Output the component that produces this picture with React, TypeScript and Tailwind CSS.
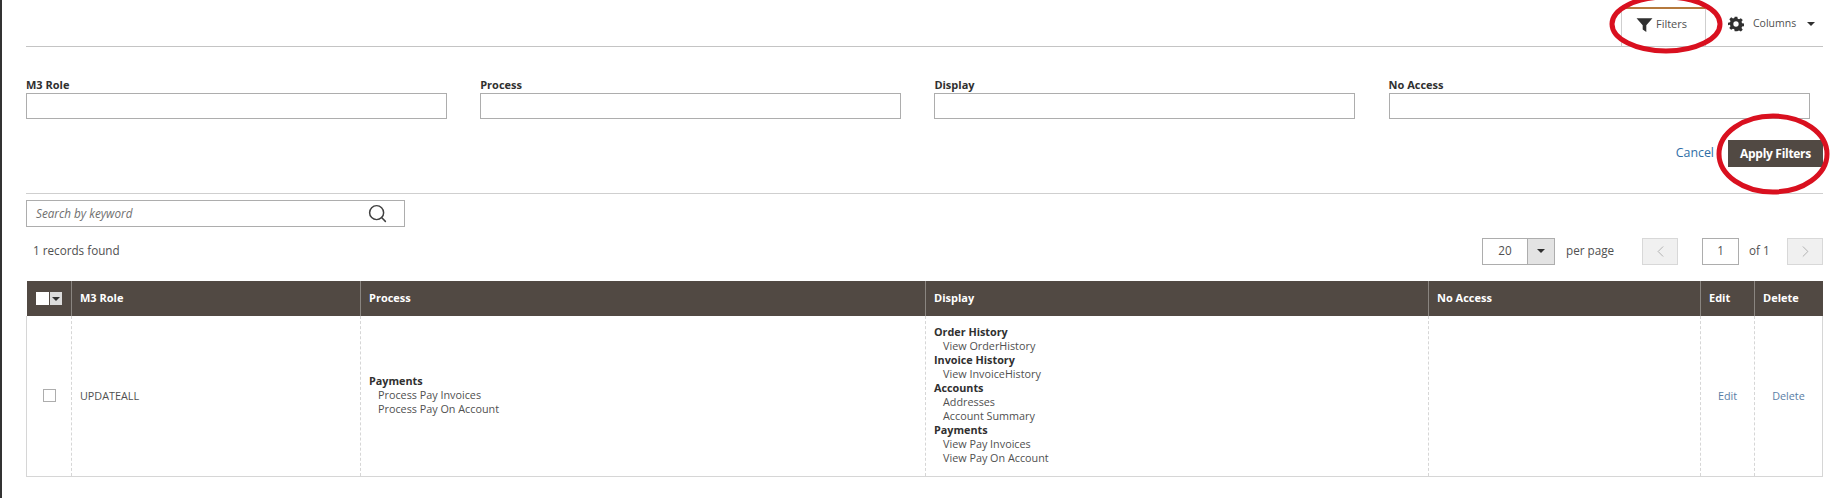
import { ChevronLeft, ChevronRight, Search } from "lucide-react";

const filterFields = ["M3 Role", "Process", "Display", "No Access"];

const processGroups = [
  { title: "Payments", items: ["Process Pay Invoices", "Process Pay On Account"] },
];

const displayGroups = [
  { title: "Order History", items: ["View OrderHistory"] },
  { title: "Invoice History", items: ["View InvoiceHistory"] },
  { title: "Accounts", items: ["Addresses", "Account Summary"] },
  { title: "Payments", items: ["View Pay Invoices", "View Pay On Account"] },
];

function Caret() {
  return <span className="inline-block w-0 h-0 border-x-[4px] border-x-transparent border-t-[4px] border-t-[#303030]" />;
}

function Groups({ groups }: { groups: { title: string; items: string[] }[] }) {
  return (
    <div className="leading-[14px] pb-[2px]">
      {groups.map((g, i) => (
        <div key={i}>
          <div className="font-bold text-[#303030]">{g.title}</div>
          {g.items.map((item) => (
            <div key={item} className="pl-[9px] text-[#505050]">{item}</div>
          ))}
        </div>
      ))}
    </div>
  );
}

export default function App() {
  return (
    <div className="relative w-[1833px] h-[498px] overflow-hidden bg-white border-l-2 border-[#333] pl-[24px] pr-[10px] font-['Open_Sans',sans-serif] text-[12px] text-[#303030]">
      {/* Action bar */}
      <div className="flex justify-end items-end h-[47px] border-b border-[#c4c4c4]">
        <button className="flex items-center justify-center gap-[3px] w-[85px] h-[39px] pb-[7px] pr-[4px] border-x border-t-2 border-x-[#cfcfcf] border-t-[#b5793d] text-[11px] text-[#505050]">
          <svg viewBox="0 0 16 16" className="w-[17px] h-[17px]" fill="#303030">
            <path d="M0.5 2h15l-5.800 6.600v6.400l-3.400-2.200v-4.200z" />
          </svg>
          Filters
        </button>
        <div className="flex items-center h-[39px] w-[117px] pl-[22px] pb-[5px] text-[10.5px] text-[#505050]">
          <svg viewBox="0 0 24 24" className="w-[16px] h-[16px] mr-[9px]" fill="#303030">
            <path
              fillRule="evenodd"
              d="M10 1h4l.6 3.200 2 .8L19.300 3.200l2.800 2.800-1.800 2.700.8 2 3.200.6v4l-3.200.6-.8 2 1.800 2.700-2.800 2.800-2.700-1.800-2 .8L14 23h-4l-.6-3.200-2-.8-2.700 1.800-2.800-2.800 1.800-2.700-.8-2L-.2 14v-4l3.200-.6.8-2L2 4.700 4.800 1.900l2.700 1.800 2-.8zM12 8a4 4 0 1 0 0 8 4 4 0 0 0 0-8z"
            />
          </svg>
          Columns
          <span className="ml-[11px] mb-[1px] flex"><Caret /></span>
        </div>
      </div>

      {/* Filter fields */}
      <div className="flex gap-[33.2px] pt-[30px]">
        {filterFields.map((label) => (
          <div key={label} className="w-[421px]">
            <div className="font-bold text-[11px] leading-[15px] mb-[1px]">{label}</div>
            <div className="h-[26px] border border-[#adadad] bg-white" />
          </div>
        ))}
      </div>

      {/* Filter actions */}
      <div className="flex justify-end items-center gap-[14px] mt-[21px]">
        <span className="text-[#2f6fa7] text-[12.4px]">Cancel</span>
        <button className="w-[95px] h-[27px] bg-[#514943] text-white font-bold text-[12px] tracking-[-0.3px]">Apply Filters</button>
      </div>

      <div className="mt-[26px] border-t border-[#cfcfcf]" />

      {/* Search */}
      <div className="flex items-center justify-between w-[379px] h-[27px] mt-[6px] border border-[#adadad] pl-[9px] pr-[16px]">
        <span className="italic text-[#707070] text-[11.7px]">Search by keyword</span>
        <Search size={21} strokeWidth={1.7} className="text-[#404040]" />
      </div>

      {/* Records and pager */}
      <div className="flex items-center justify-between h-[28px] mt-[10px] pl-[7px] pr-0 text-[11.7px]">
        <span className="text-[#505050]">1 records found</span>
        <div className="flex items-center">
          <div className="flex h-[27px] w-[73px] border border-[#adadad]">
            <span className="flex-1 flex items-center justify-center text-[#505050]">20</span>
            <span className="w-[27px] flex items-center justify-center bg-[#e3e3e3] border-l border-[#adadad]"><Caret /></span>
          </div>
          <span className="ml-[11px] w-[76px] text-[#505050]">per page</span>
          <span className="flex items-center justify-center w-[36px] h-[27px] bg-[#f0f0f0] border border-[#d8d8d8]">
            <ChevronLeft size={19} strokeWidth={1.1} className="text-[#a8a8a8]" />
          </span>
          <span className="flex items-center justify-center w-[37px] h-[27px] ml-[24px] border border-[#adadad] text-[#505050]">1</span>
          <span className="ml-[10px] w-[38px] text-[#505050]">of 1</span>
          <span className="flex items-center justify-center w-[36px] h-[27px] bg-[#f0f0f0] border border-[#d8d8d8]">
            <ChevronRight size={19} strokeWidth={1.1} className="text-[#a8a8a8]" />
          </span>
        </div>
      </div>

      {/* Grid */}
      <table className="mt-[16px] w-[1796px] table-fixed border-collapse">
        <colgroup>
          <col className="w-[45px]" />
          <col className="w-[289px]" />
          <col className="w-[565px]" />
          <col className="w-[503px]" />
          <col className="w-[272px]" />
          <col className="w-[54px]" />
          <col className="w-[68px]" />
        </colgroup>
        <thead>
          <tr className="h-[35px] bg-[#514943] text-white text-[11px] text-left">
            <th className="p-0">
              <div className="flex items-center ml-[9px] h-[13px]">
                <span className="w-[13px] h-[13px] bg-white" />
                <span className="w-[12px] h-[13px] ml-[1px] bg-[#dcdcdc] flex items-center justify-center"><Caret /></span>
              </div>
            </th>
            <th className="pl-[8px] border-l border-[#8a8580] font-bold">M3 Role</th>
            <th className="pl-[8px] border-l border-[#8a8580] font-bold">Process</th>
            <th className="pl-[8px] border-l border-[#8a8580] font-bold">Display</th>
            <th className="pl-[8px] border-l border-[#8a8580] font-bold">No Access</th>
            <th className="pl-[8px] border-l border-[#8a8580] font-bold">Edit</th>
            <th className="pl-[8px] border-l border-[#8a8580] font-bold">Delete</th>
          </tr>
        </thead>
        <tbody>
          <tr className="h-[160px] align-middle text-[10.8px] border-x border-b border-[#d6d6d6]">
            <td className="p-0">
              <span className="block w-[13px] h-[13px] ml-[16px] border border-[#adadad]" />
            </td>
            <td className="pl-[8px] border-l border-dashed border-[#d6d6d6] text-[#505050]">UPDATEALL</td>
            <td className="pl-[8px] border-l border-dashed border-[#d6d6d6]">
              <Groups groups={processGroups} />
            </td>
            <td className="pl-[8px] border-l border-dashed border-[#d6d6d6]">
              <Groups groups={displayGroups} />
            </td>
            <td className="border-l border-dashed border-[#d6d6d6]" />
            <td className="border-l border-dashed border-[#d6d6d6] text-center text-[#5a7ea6]">Edit</td>
            <td className="border-l border-dashed border-[#d6d6d6] text-center text-[#5a7ea6]">Delete</td>
          </tr>
        </tbody>
      </table>

      {/* Red hand-drawn ellipses over the screenshot */}
      <svg className="absolute left-0 top-0 pointer-events-none" width="1833" height="498" fill="none" stroke="#d9101f" strokeWidth="5">
        <ellipse cx="1664" cy="24" rx="54" ry="27" />
        <ellipse cx="1771" cy="154" rx="54" ry="38" />
      </svg>
    </div>
  );
}
